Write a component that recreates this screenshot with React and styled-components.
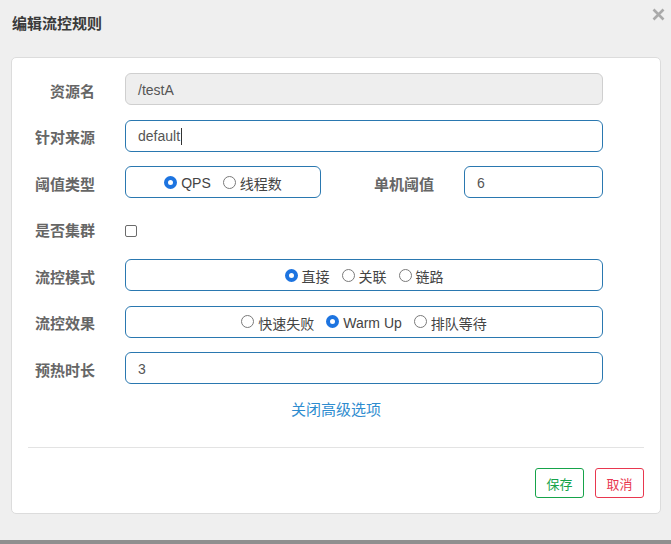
import React from 'react'
import styled, { createGlobalStyle } from 'styled-components'

const GlobalStyle = createGlobalStyle`
  html, body {
    margin: 0;
    padding: 0;
    background: #efefef;
  }
  body {
    font-family: "Liberation Sans", "Noto Sans CJK SC", sans-serif;
    color: #555;
  }
`

const Page = styled.div`
  display: flex;
  flex-direction: column;
  height: 544px;
  background: #efefef;
`
const Header = styled.div`
  display: flex;
  align-items: center;
  justify-content: space-between;
  height: 44px;
  padding: 0 6px 0 12px;
  margin-bottom: 13px;
`
const Title = styled.div`
  font-size: 15px;
  font-weight: 700;
  color: #3a3a3a;
  margin-top: 1px;
`
const Close = styled.div`
  display: flex;
  align-self: flex-start;
  margin-top: 8px;
`
const Card = styled.div`
  margin: 0 10px 0 11px;
  background: #fff;
  border: 1px solid #dcdcdc;
  border-radius: 5px;
  padding: 15px 16px 15px 16px;
`
const Form = styled.div`
  display: grid;
  grid-template-columns: 67px 1fr;
  column-gap: 30px;
  row-gap: 14.5px;
  padding-right: 41px;
`
const Label = styled.div`
  display: flex;
  align-items: center;
  justify-content: flex-end;
  height: 32px;
  padding-top: 2px;
  box-sizing: border-box;
  font-size: 15px;
  font-weight: 700;
  color: #666;
  white-space: nowrap;
`
const Field = styled.div`
  display: flex;
  align-items: center;
  box-sizing: border-box;
  height: 32px;
  width: ${p => p.width || 'auto'};
  padding: 1px 12px 0;
  border: 1px solid ${p => (p.disabled ? '#cfcfcf' : '#2a78b0')};
  border-radius: 6px;
  background: ${p => (p.disabled ? '#eeeeee' : '#fff')};
  font-size: 14px;
  color: #555;
`
const Caret = styled.span`
  display: inline-block;
  width: 1px;
  height: 17px;
  background: #333;
  margin-left: 1px;
`
const RadioBox = styled(Field)`
  justify-content: center;
  padding: 2px 0 0;
`
const Option = styled.label`
  display: flex;
  align-items: center;
  gap: 4px;
  margin: 0 6px;
  font-size: 14px;
  color: #444;
`
const Dot = styled.span`
  box-sizing: border-box;
  width: 13px;
  height: 13px;
  margin-top: -2px;
  border-radius: 50%;
  background: #fff;
  border: ${p => (p.checked ? '4px solid #1d74e0' : '1px solid #7a7a7a')};
`
const Check = styled.span`
  box-sizing: border-box;
  width: 12px;
  height: 12px;
  border: 1px solid #6b6b6b;
  border-radius: 2px;
  background: #fff;
`
const CheckCell = styled.div`
  display: flex;
  align-items: center;
  height: 32px;
  padding-top: 5px;
  box-sizing: border-box;
`
const Split = styled.div`
  display: flex;
  align-items: center;
`
const SideLabel = styled(Label)`
  flex: 1;
  margin-right: 30px;
`
const Toggle = styled.div`
  text-align: center;
  margin: 16px 0 27px;
  line-height: 20px;
  font-size: 15px;
  color: #2e8ccf;
  cursor: pointer;
`
const Divider = styled.div`
  height: 1px;
  background: #e3e3e3;
`
const Footer = styled.div`
  display: flex;
  justify-content: flex-end;
  gap: 11px;
  margin-top: 20px;
`
const Button = styled.button`
  box-sizing: border-box;
  width: 49px;
  height: 30px;
  padding: 0;
  border-radius: 3px;
  background: #fff;
  font-family: "Liberation Sans", "Noto Sans CJK SC", sans-serif;
  font-size: 13px;
  color: ${p => p.color};
  border: 1px solid ${p => p.color};
`
const BottomBar = styled.div`
  margin-top: auto;
  height: 4px;
  background: #8f8f8f;
`

const Radios = ({ items, value }) =>
  items.map(item => (
    <Option key={item}>
      <Dot checked={item === value} />
      {item}
    </Option>
  ))

export default function App() {
  return (
    <Page>
      <GlobalStyle />
      <Header>
        <Title>编辑流控规则</Title>
        <Close>
          <svg width="13" height="13" viewBox="0 0 13 13">
            <path d="M1.5 1.5L11.5 11.5M11.5 1.5L1.5 11.5" stroke="#a9a9a9" strokeWidth="2.6" />
          </svg>
        </Close>
      </Header>
      <Card>
        <Form>
          <Label>资源名</Label>
          <Field disabled>/testA</Field>

          <Label>针对来源</Label>
          <Field>default<Caret /></Field>

          <Label>阈值类型</Label>
          <Split>
            <RadioBox width="196px">
              <Radios items={['QPS', '线程数']} value="QPS" />
            </RadioBox>
            <SideLabel>单机阈值</SideLabel>
            <Field width="139px">6</Field>
          </Split>

          <Label>是否集群</Label>
          <CheckCell>
            <Check />
          </CheckCell>

          <Label>流控模式</Label>
          <RadioBox>
            <Radios items={['直接', '关联', '链路']} value="直接" />
          </RadioBox>

          <Label>流控效果</Label>
          <RadioBox>
            <Radios items={['快速失败', 'Warm Up', '排队等待']} value="Warm Up" />
          </RadioBox>

          <Label>预热时长</Label>
          <Field>3</Field>
        </Form>
        <Toggle>关闭高级选项</Toggle>
        <Divider />
        <Footer>
          <Button color="#16a34a">保存</Button>
          <Button color="#e8374f">取消</Button>
        </Footer>
      </Card>
      <BottomBar />
    </Page>
  )
}
